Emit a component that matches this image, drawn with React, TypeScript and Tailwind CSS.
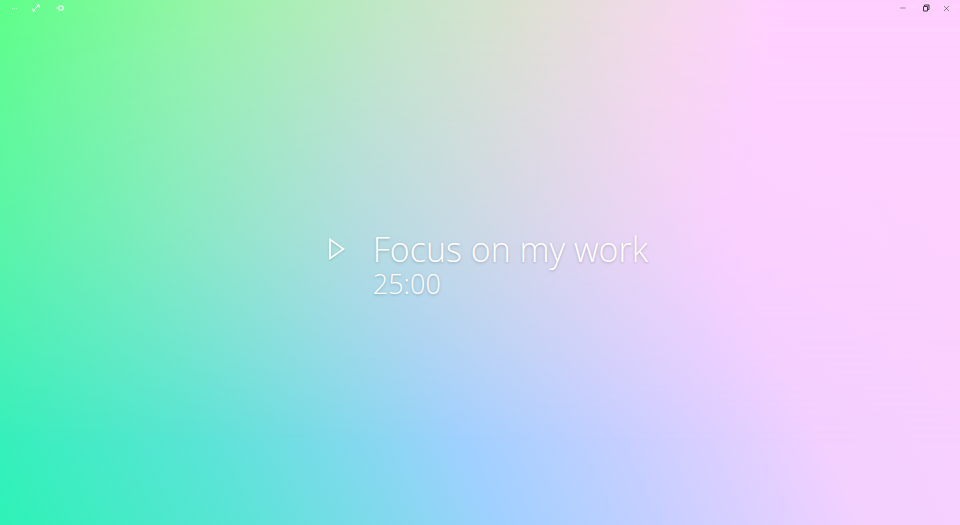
import { Minus, X } from "lucide-react";

function PlayOutline() {
	return (
		<svg width="18" height="22" viewBox="0 0 18 22" className="drop-shadow-[0_1px_1px_rgba(0,0,0,0.15)]">
			<path d="M2 1.5 L15.5 11 L2 20.5 Z" fill="none" stroke="white" strokeWidth="1.6" strokeLinejoin="miter" />
		</svg>
	);
}

function TitleBar() {
	return (
		<div className="flex h-4 items-center justify-between">
			<div className="flex items-center">
				<div className="flex w-6 items-center justify-center gap-[1px] pl-1">
					<span className="h-[1px] w-[1px] bg-white/50" />
					<span className="h-[1px] w-[1px] bg-white/50" />
					<span className="h-[1px] w-[1px] bg-white/50" />
				</div>
				<div className="flex w-6 items-center justify-center">
					<svg width="8" height="8" viewBox="0 0 8 8">
						<path d="M1 7 L7 1 M4.5 1 H7 V3.5 M1 4.5 V7 H3.5" fill="none" stroke="white" strokeWidth="1" />
					</svg>
				</div>
				<div className="flex w-6 items-center justify-center">
					<svg width="8" height="8" viewBox="0 0 8 8">
						<path d="M0.5 4 H3 M3 1.5 V6.5 M3 2 H7 V6 H3" fill="none" stroke="white" strokeWidth="1" />
					</svg>
				</div>
			</div>
			<div className="flex items-center text-[#3c3c3c]">
				<div className="flex w-[23px] items-center justify-center">
					<Minus size={8} strokeWidth={1.5} />
				</div>
				<div className="flex w-[23px] items-center justify-center">
					<svg width="8" height="8" viewBox="0 0 8 8">
						<path d="M1.5 2.5 H5.5 V7 H1.5 Z M2.5 2.5 V1 H7 V5.5 H5.5" fill="none" stroke="#3c3c3c" strokeWidth="1" />
					</svg>
				</div>
				<div className="flex w-[23px] items-center justify-center pr-1">
					<X size={9} strokeWidth={1.5} />
				</div>
			</div>
		</div>
	);
}

export default function App() {
	return (
		<div className="relative flex h-[525px] w-[960px] flex-col overflow-hidden bg-[linear-gradient(66deg,#2ef2b6_0%,#5ae4d6_20%,#a0d0ff_42%,#cdcfff_58%,#f2d0ff_72%,#ffd0fc_100%)] font-['Open_Sans',sans-serif]">
			<div className="pointer-events-none absolute inset-0 bg-[linear-gradient(100deg,#5eff88_0%,#98f4a8_20%,#c4e6c8_38%,#dce0d2_50%,#f4d8ec_64%,#ffd0ff_74%,#ffd0ff_100%)] [mask-image:linear-gradient(to_bottom,black_0%,rgba(0,0,0,0.55)_45%,transparent_85%)]" />
			<div className="relative">
				<TitleBar />
			</div>
			<div className="relative flex flex-1 items-center justify-center pb-[12px] pl-[16px]">
				<div className="flex items-start gap-[27px]">
					<div className="pt-[8px]">
						<PlayOutline />
					</div>
					<div className="flex flex-col text-white [text-shadow:0_1px_3px_rgba(0,0,0,0.22)]">
						<div className="text-[34px] font-light leading-[38px]">Focus on my work</div>
						<div className="text-[27px] font-light leading-[32px]">25:00</div>
					</div>
				</div>
			</div>
		</div>
	);
}
